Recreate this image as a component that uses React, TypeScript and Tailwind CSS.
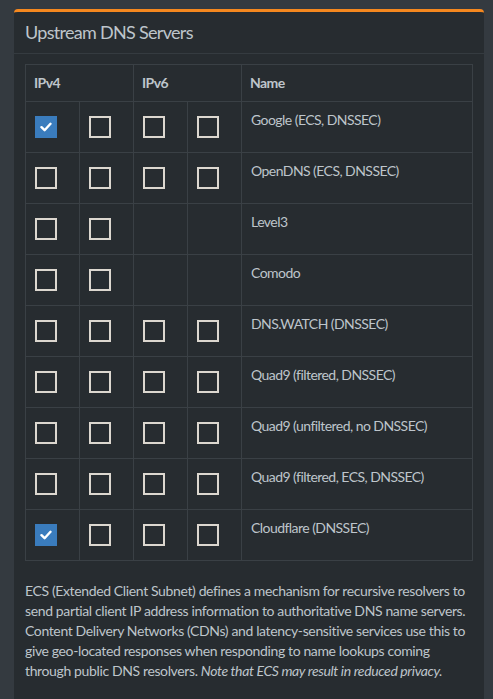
import React, { useState } from 'react'

interface Upstream {
  name: string
  v4: [boolean, boolean]
  v6: [boolean, boolean] | null
}

const initial: Upstream[] = [
  { name: 'Google (ECS, DNSSEC)', v4: [true, false], v6: [false, false] },
  { name: 'OpenDNS (ECS, DNSSEC)', v4: [false, false], v6: [false, false] },
  { name: 'Level3', v4: [false, false], v6: null },
  { name: 'Comodo', v4: [false, false], v6: null },
  { name: 'DNS.WATCH (DNSSEC)', v4: [false, false], v6: [false, false] },
  { name: 'Quad9 (filtered, DNSSEC)', v4: [false, false], v6: [false, false] },
  { name: 'Quad9 (unfiltered, no DNSSEC)', v4: [false, false], v6: [false, false] },
  { name: 'Quad9 (filtered, ECS, DNSSEC)', v4: [false, false], v6: [false, false] },
  { name: 'Cloudflare (DNSSEC)', v4: [true, false], v6: [false, false] },
]

const Check: React.FC<{ checked: boolean; onToggle: () => void }> = ({ checked, onToggle }) => (
  <button
    type="button"
    onClick={onToggle}
    className={`mt-[6px] ml-[1px] flex h-[22px] w-[22px] items-center justify-center ${
      checked ? 'bg-[#3a7cbd]' : 'border-2 border-[#dcd7cf] bg-transparent'
    }`}
  >
    {checked && (
      <svg width="12" height="10" viewBox="0 0 12 10" fill="none">
        <path d="M1.5 5.2 4.6 8.2 10.5 1.8" stroke="#fff" strokeWidth="2.4" strokeLinecap="round" strokeLinejoin="round" />
      </svg>
    )}
  </button>
)

const App: React.FC = () => {
  const [servers, setServers] = useState(initial)

  const toggle = (row: number, fam: 'v4' | 'v6', idx: number) => {
    setServers(prev =>
      prev.map((s, i) => {
        if (i !== row) return s
        const pair = s[fam]
        if (!pair) return s
        const next: [boolean, boolean] = [pair[0], pair[1]]
        next[idx] = !next[idx]
        return { ...s, [fam]: next }
      })
    )
  }

  const cell = 'h-[51px] border border-[#3a4045] px-2 pt-2 align-top'

  return (
    <div
      className="min-h-[699px] bg-[#343a40] pt-[9px] pl-[14px] pr-[9px] text-[14px] leading-[20px] tracking-[-0.55px] text-[#bec5cb]"
      style={{ fontFamily: '"Source Sans Pro", Lato, "Noto Sans", sans-serif' }}
    >
      <div className="min-h-[690px] rounded-t-[4px] border-t-[3px] border-[#f5881f] bg-[#272c30]">
        {/* box header */}
        <div className="border-b border-[#353b40] px-[11px] pt-[9px] pb-[10px]">
          <h3 className="text-[18px] leading-[22px] tracking-[-0.7px] text-[#bec5cb]">Upstream DNS Servers</h3>
        </div>

        {/* box body */}
        <div className="px-[11px] pt-[10px] pb-4">
          <table className="w-full border-collapse">
            <thead>
              <tr>
                <th colSpan={2} className="h-[37px] w-[108px] border border-[#3a4045] px-2 text-left font-bold">IPv4</th>
                <th colSpan={2} className="w-[108px] border border-[#3a4045] px-2 text-left font-bold">IPv6</th>
                <th className="border border-[#3a4045] px-2 text-left font-bold">Name</th>
              </tr>
            </thead>
            <tbody>
              {servers.map((s, row) => (
                <tr key={s.name}>
                  {s.v4.map((c, i) => (
                    <td key={`v4-${i}`} className={`${cell} w-[54px]`}>
                      <Check checked={c} onToggle={() => toggle(row, 'v4', i)} />
                    </td>
                  ))}
                  {s.v6
                    ? s.v6.map((c, i) => (
                        <td key={`v6-${i}`} className={`${cell} w-[54px]`}>
                          <Check checked={c} onToggle={() => toggle(row, 'v6', i)} />
                        </td>
                      ))
                    : [0, 1].map(i => <td key={`v6-${i}`} className={`${cell} w-[54px]`} />)}
                  <td className={`${cell} pl-[9px]`}>{s.name}</td>
                </tr>
              ))}
            </tbody>
          </table>

          <p className="mt-[20px] whitespace-nowrap tracking-[-0.37px]">
            <span className="block">ECS (Extended Client Subnet) defines a mechanism for recursive resolvers to</span>
            <span className="block">send partial client IP address information to authoritative DNS name servers.</span>
            <span className="block">Content Delivery Networks (CDNs) and latency-sensitive services use this to</span>
            <span className="block">give geo-located responses when responding to name lookups coming</span>
            <span className="block">
              through public DNS resolvers. <em>Note that ECS may result in reduced privacy.</em>
            </span>
          </p>
        </div>
      </div>
    </div>
  )
}

export default App
